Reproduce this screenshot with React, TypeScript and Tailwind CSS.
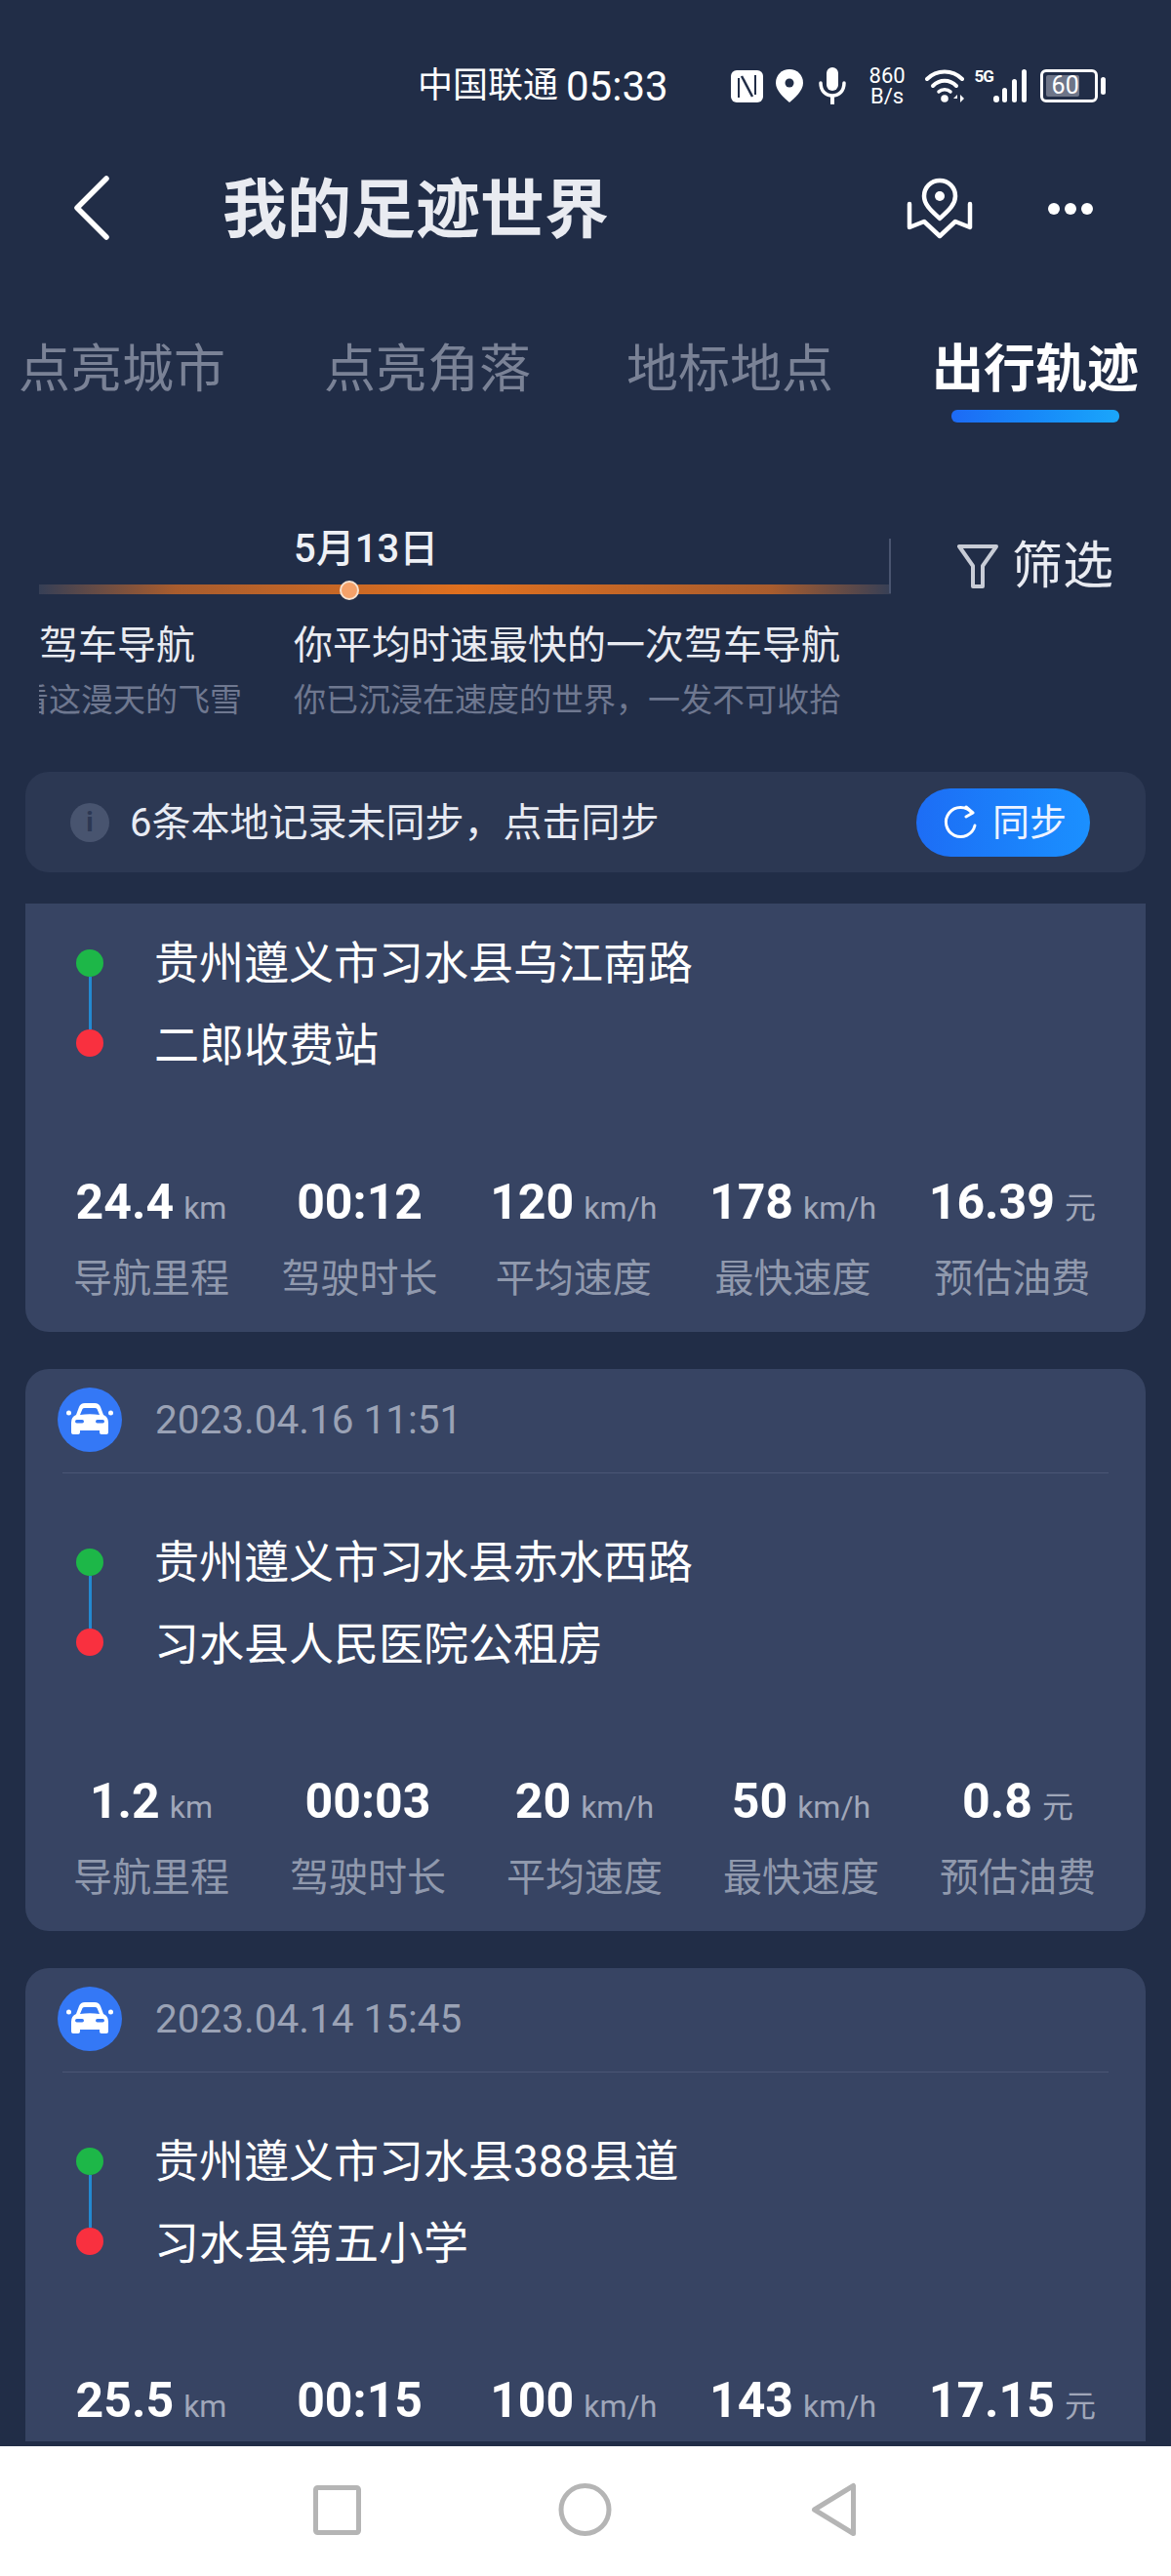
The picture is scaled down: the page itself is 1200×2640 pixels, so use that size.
const trips = [
  {
    date: "",
    from: "贵州遵义市习水县乌江南路",
    to: "二郎收费站",
    stats: [
      { value: "24.4", unit: "km", label: "导航里程" },
      { value: "00:12", unit: "", label: "驾驶时长" },
      { value: "120", unit: "km/h", label: "平均速度" },
      { value: "178", unit: "km/h", label: "最快速度" },
      { value: "16.39", unit: "元", label: "预估油费" },
    ],
  },
  {
    date: "2023.04.16 11:51",
    from: "贵州遵义市习水县赤水西路",
    to: "习水县人民医院公租房",
    stats: [
      { value: "1.2", unit: "km", label: "导航里程" },
      { value: "00:03", unit: "", label: "驾驶时长" },
      { value: "20", unit: "km/h", label: "平均速度" },
      { value: "50", unit: "km/h", label: "最快速度" },
      { value: "0.8", unit: "元", label: "预估油费" },
    ],
  },
  {
    date: "2023.04.14 15:45",
    from: "贵州遵义市习水县388县道",
    to: "习水县第五小学",
    stats: [
      { value: "25.5", unit: "km", label: "导航里程" },
      { value: "00:15", unit: "", label: "驾驶时长" },
      { value: "100", unit: "km/h", label: "平均速度" },
      { value: "143", unit: "km/h", label: "最快速度" },
      { value: "17.15", unit: "元", label: "预估油费" },
    ],
  },
];

function CarIcon() {
  return (
    <svg viewBox="0 0 66 66" className="w-[66px] h-[66px]">
      <circle cx="33" cy="33" r="33" fill="#3478f6" />
      <path
        d="M19 28 L22 20 Q23.500 16 28 16 H38 Q42.500 16 44 20 L47 28 Q52 30 52 36 V46 Q52 48 50 48 H45 Q43 48 43 46 V44 H23 V46 Q23 48 21 48 H16 Q14 48 14 46 V36 Q14 30 19 28 Z"
        fill="#fff"
      />
      <path d="M23 28 L25.500 22 Q26 21 28 21 H38 Q40 21 40.500 22 L43 28 Q33 26.500 23 28 Z" fill="#3478f6" />
      <rect x="18" y="33" width="9" height="3.500" rx="1.700" fill="#3478f6" />
      <rect x="39" y="33" width="9" height="3.500" rx="1.700" fill="#3478f6" />
      <circle cx="11.500" cy="26" r="2.500" fill="#fff" />
      <circle cx="54.500" cy="26" r="2.500" fill="#fff" />
    </svg>
  );
}

function TripCard({ trip }: { trip: (typeof trips)[number] }) {
  return (
    <div className="bg-[#374463] rounded-[24px] pt-[19px] pb-[30px] shrink-0">
      <div className="flex items-center h-[66px] pl-[33px]">
        <CarIcon />
        <span className="ml-[34px] text-[40.500px] leading-[48px] text-[#9aa2b5]">{trip.date}</span>
      </div>
      <div className="mt-[21px] mx-[38px] h-px bg-[#4a5675]" />
      <div className="relative mt-[49px] pl-[132px]">
        <div className="h-[84px] flex items-center text-[46px] text-white">{trip.from}</div>
        <div className="h-[84px] flex items-center text-[46px] text-white">{trip.to}</div>
        <div className="absolute left-[52px] top-[28px] flex flex-col items-center w-[28px]">
          <div className="w-[28px] h-[28px] rounded-full bg-[#1db748]" />
          <div className="w-[3px] h-[54px] bg-[#2389d0]" />
          <div className="w-[28px] h-[28px] rounded-full bg-[#f9303f]" />
        </div>
      </div>
      <div className="mt-[89px] flex justify-between pl-[49px] pr-[51px]">
        {trip.stats.map((s) => (
          <div key={s.label} className="flex flex-col items-center">
            <div className="h-[60px] flex items-baseline leading-[60px] whitespace-nowrap">
              <span className="text-[50px] font-bold text-white">{s.value}</span>
              {s.unit && <span className="ml-[10px] text-[32px] text-[#a0a7b9]">{s.unit}</span>}
            </div>
            <div className="mt-[25px] text-[40px] leading-[48px] text-[#9099ad] whitespace-nowrap">{s.label}</div>
          </div>
        ))}
      </div>
    </div>
  );
}

function StatusIcons() {
  return (
    <div className="flex items-center">
      {/* nfc */}
      <svg viewBox="0 0 33 33" className="w-[33px] h-[33px]">
        <rect width="33" height="33" rx="6" fill="#fff" />
        <path d="M8 8 V28 M25 5 V25" fill="none" stroke="#212d47" strokeWidth="2" />
        <path d="M11 6 L22 27" fill="none" stroke="#212d47" strokeWidth="2.500" />
      </svg>
      {/* location */}
      <svg viewBox="0 0 28 34" className="ml-[13px] w-[28px] h-[34px]">
        <path d="M14 0 C6 0 0 6 0 14 C0 22 9 30 14 34 C19 30 28 22 28 14 C28 6 22 0 14 0 Z" fill="#fff" />
        <circle cx="14" cy="14" r="4.500" fill="#212d47" />
      </svg>
      {/* mic */}
      <svg viewBox="0 0 28 38" className="ml-[16px] w-[28px] h-[38px]">
        <rect x="8" y="0" width="12" height="24" rx="6" fill="#fff" />
        <path d="M2 16 C2 24 7 29 14 29 C21 29 26 24 26 16" fill="none" stroke="#fff" strokeWidth="3.500" strokeLinecap="round" />
        <rect x="12" y="28" width="4" height="10" fill="#fff" />
      </svg>
      <div className="ml-[21px] w-[43px] flex flex-col items-center text-white text-[22px] leading-[21px] font-normal">
        <span>860</span>
        <span>B/s</span>
      </div>
      {/* wifi */}
      <svg viewBox="0 0 43 36" className="ml-[17px] w-[43px] h-[36px]">
        <path d="M2 11 C12 1 28 1 38 11" fill="none" stroke="#fff" strokeWidth="4" strokeLinecap="round" />
        <path d="M8 18 C15 11 25 11 32 18" fill="none" stroke="#fff" strokeWidth="4" strokeLinecap="round" />
        <path d="M14 24 C17 21 23 21 26 24" fill="none" stroke="#fff" strokeWidth="3.500" strokeLinecap="round" />
        <circle cx="20" cy="31" r="3.800" fill="#fff" />
        <path d="M33 27 L29 31 H33 Z M36 27 V35 L40 31 Z" fill="#fff" />
      </svg>
      <div className="ml-[8px] flex items-start h-[36px]">
        <span className="text-[17px] leading-[17px] font-bold text-white tracking-[-1px] w-[18px]">5G</span>
        <svg viewBox="0 0 36 36" className="w-[36px] h-[36px]">
          <rect x="1" y="28" width="6" height="7" rx="3" fill="#fff" />
          <rect x="10" y="20" width="5" height="15" rx="2.500" fill="#fff" />
          <rect x="20" y="11" width="5" height="24" rx="2.500" fill="#fff" />
          <rect x="30" y="1" width="5" height="34" rx="2.500" fill="#fff" />
        </svg>
      </div>
      {/* battery */}
      <div className="ml-[13px] relative w-[59px] h-[34px] rounded-[6px] border-[3px] border-white flex items-center overflow-hidden">
        <div className="absolute left-[3px] top-[3px] bottom-[3px] w-[34px] rounded-[2px] bg-[#6e7588]" />
        <span className="relative ml-[9px] text-[25px] leading-[28px] text-white">60</span>
      </div>
      <div className="ml-[3px] w-[5px] h-[18px] rounded-full bg-white" />
    </div>
  );
}

export default function App() {
  return (
    <div
      className="w-[1200px] h-[2640px] flex flex-col bg-[#212d47] overflow-hidden"
      style={{ fontFamily: 'Roboto, "Noto Sans CJK SC", sans-serif' }}
    >
      {/* status bar */}
      <div className="h-[176px] shrink-0 flex items-center pl-[428px]">
        <span className="text-[36px] text-white whitespace-nowrap">中国联通</span>
        <span className="ml-[8px] text-[42px] text-white">05:33</span>
        <div className="ml-[64px]">
          <StatusIcons />
        </div>
      </div>

      {/* header */}
      <div className="h-[74px] shrink-0 flex items-center pl-[75px]">
        <svg viewBox="0 0 37 66" className="w-[37px] h-[66px] shrink-0">
          <path d="M34 3 L4 33 L34 63" fill="none" stroke="#fff" strokeWidth="5.500" strokeLinecap="round" strokeLinejoin="round" />
        </svg>
        <h1 className="ml-[116px] mt-[5px] text-[66px] leading-[74px] font-bold text-[#e9ebf1] whitespace-nowrap">我的足迹世界</h1>
        <svg viewBox="0 0 68 64" className="ml-[305px] mt-[2px] w-[68px] h-[64px] shrink-0">
          <path d="M34 3 C25 3 18 10 18 19 C18 29 28 36 34 42 C40 36 50 29 50 19 C50 10 43 3 34 3 Z" fill="none" stroke="#fff" strokeWidth="4.500" strokeLinejoin="round" />
          <circle cx="34" cy="19" r="5" fill="#fff" />
          <path d="M3 27 V51 L18 45 L34 60 L50 45 L65 51 V27" fill="none" stroke="#fff" strokeWidth="4.500" strokeLinecap="round" strokeLinejoin="round" />
        </svg>
        <div className="ml-[77px] mt-[2px] flex gap-[5px]">
          <div className="w-[12px] h-[12px] rounded-full bg-white" />
          <div className="w-[12px] h-[12px] rounded-full bg-white" />
          <div className="w-[12px] h-[12px] rounded-full bg-white" />
        </div>
      </div>

      {/* tabs */}
      <div className="mt-[97px] h-[94px] shrink-0 flex items-start pl-[19px] gap-[101px] text-[53px] leading-[64px] whitespace-nowrap text-[#7a8296]">
        <span>点亮城市</span>
        <span>点亮角落</span>
        <span className="-ml-[3px]">地标地点</span>
        <div className="flex flex-col items-center">
          <span className="font-bold text-white">出行轨迹</span>
          <div className="mt-[9px] w-[172px] h-[13px] rounded-[6px] bg-gradient-to-r from-[#1d6af5] to-[#1ba6fb]" />
        </div>
      </div>

      {/* timeline */}
      <div className="mt-[98px] shrink-0 flex items-start pl-[40px]">
        <div className="w-[873px] shrink-0">
          <div className="relative">
            <div className="pl-[261px] h-[44px] pt-[2px] text-[40px] leading-[44px] font-medium text-[#eef0f5] whitespace-nowrap">5月13日</div>
            <div className="mt-[16px] h-[10px] bg-[linear-gradient(90deg,#363f56,#a85c2e_16%,#e0701f_50%,#a85c2e_86%,#363f56)]" />
            <div className="absolute left-[308px] top-[56px] w-[20px] h-[20px] rounded-full bg-[#f5a26a] border-[2px] border-[#f6e2d0]" />
            <div className="absolute right-0 top-[13px] h-[56px] w-[2px] bg-[#4a5570]" />
          </div>
          <div className="mt-[25px] flex overflow-hidden whitespace-nowrap">
            <div className="w-[208px] shrink-0 flex flex-col">
              <span className="text-[40px] leading-[56px] text-[#e9ebf1]">驾车导航</span>
              <div className="mt-[8px] flex justify-end">
                <span className="shrink-0 text-[33px] leading-[40px] text-[#6f7890]">看这漫天的飞雪</span>
              </div>
            </div>
            <div className="ml-[53px] flex flex-col">
              <span className="text-[40px] leading-[56px] text-[#e9ebf1]">你平均时速最快的一次驾车导航</span>
              <span className="mt-[8px] text-[33px] leading-[40px] text-[#6f7890]">你已沉浸在速度的世界，一发不可收拾</span>
            </div>
          </div>
        </div>
        <div className="ml-[67px] mt-[12px] flex items-center">
          <svg viewBox="0 0 44 48" className="w-[44px] h-[48px]">
            <path d="M3 3 H41 L27 23 V44 H17 V23 Z" fill="none" stroke="#c8ccd6" strokeWidth="4" strokeLinejoin="round" />
          </svg>
          <span className="ml-[13px] text-[52px] leading-[60px] text-[#e9ebf1] whitespace-nowrap">筛选</span>
        </div>
      </div>

      {/* sync */}
      <div className="mt-[53px] mx-[26px] h-[103px] shrink-0 rounded-[24px] bg-[#2c3853] flex items-center pl-[46px] pr-[57px]">
        <div className="w-[40px] h-[40px] rounded-full bg-[#48546f] flex items-center justify-center text-[28px] font-bold text-[#2c3853]">i</div>
        <span className="ml-[21px] mt-[2px] text-[40px] text-[#e8ebf3] whitespace-nowrap">6条本地记录未同步，点击同步</span>
        <div className="ml-auto w-[178px] h-[70px] rounded-full bg-gradient-to-r from-[#1d6df5] to-[#1b90ff] flex items-center pl-[27px]">
          <svg viewBox="0 0 36 36" className="w-[36px] h-[36px] shrink-0">
            <path d="M30 8 A15 15 0 1 0 33 21" fill="none" stroke="#fff" strokeWidth="3" strokeLinecap="round" />
            <path d="M24 2 L31 8 L24 12" fill="none" stroke="#fff" strokeWidth="3" strokeLinecap="round" strokeLinejoin="round" />
          </svg>
          <span className="ml-[15px] mt-[2px] text-[38px] text-[#eef3ff] whitespace-nowrap">同步</span>
        </div>
      </div>

      {/* list, scrolled so the first card is cut at the top */}
      <div className="mt-[32px] mx-[26px] h-[1576px] shrink-0 overflow-hidden">
        <div className="-mt-[137px] flex flex-col gap-[38px]">
          {trips.map((t) => (
            <TripCard key={t.from} trip={t} />
          ))}
        </div>
      </div>

      {/* nav bar */}
      <div className="mt-[5px] flex-1 bg-white flex items-start">
        <svg viewBox="0 0 1200 130" className="w-[1200px] h-[130px]">
          <rect x="323.500" y="42.500" width="44" height="46" rx="2" fill="none" stroke="#b5b5b5" strokeWidth="5" />
          <circle cx="599.500" cy="65" r="24.500" fill="none" stroke="#b5b5b5" strokeWidth="5" />
          <path d="M874.500 40.500 V89.500 L834.500 65 Z" fill="none" stroke="#b5b5b5" strokeWidth="5" strokeLinejoin="round" />
        </svg>
      </div>
    </div>
  );
}
